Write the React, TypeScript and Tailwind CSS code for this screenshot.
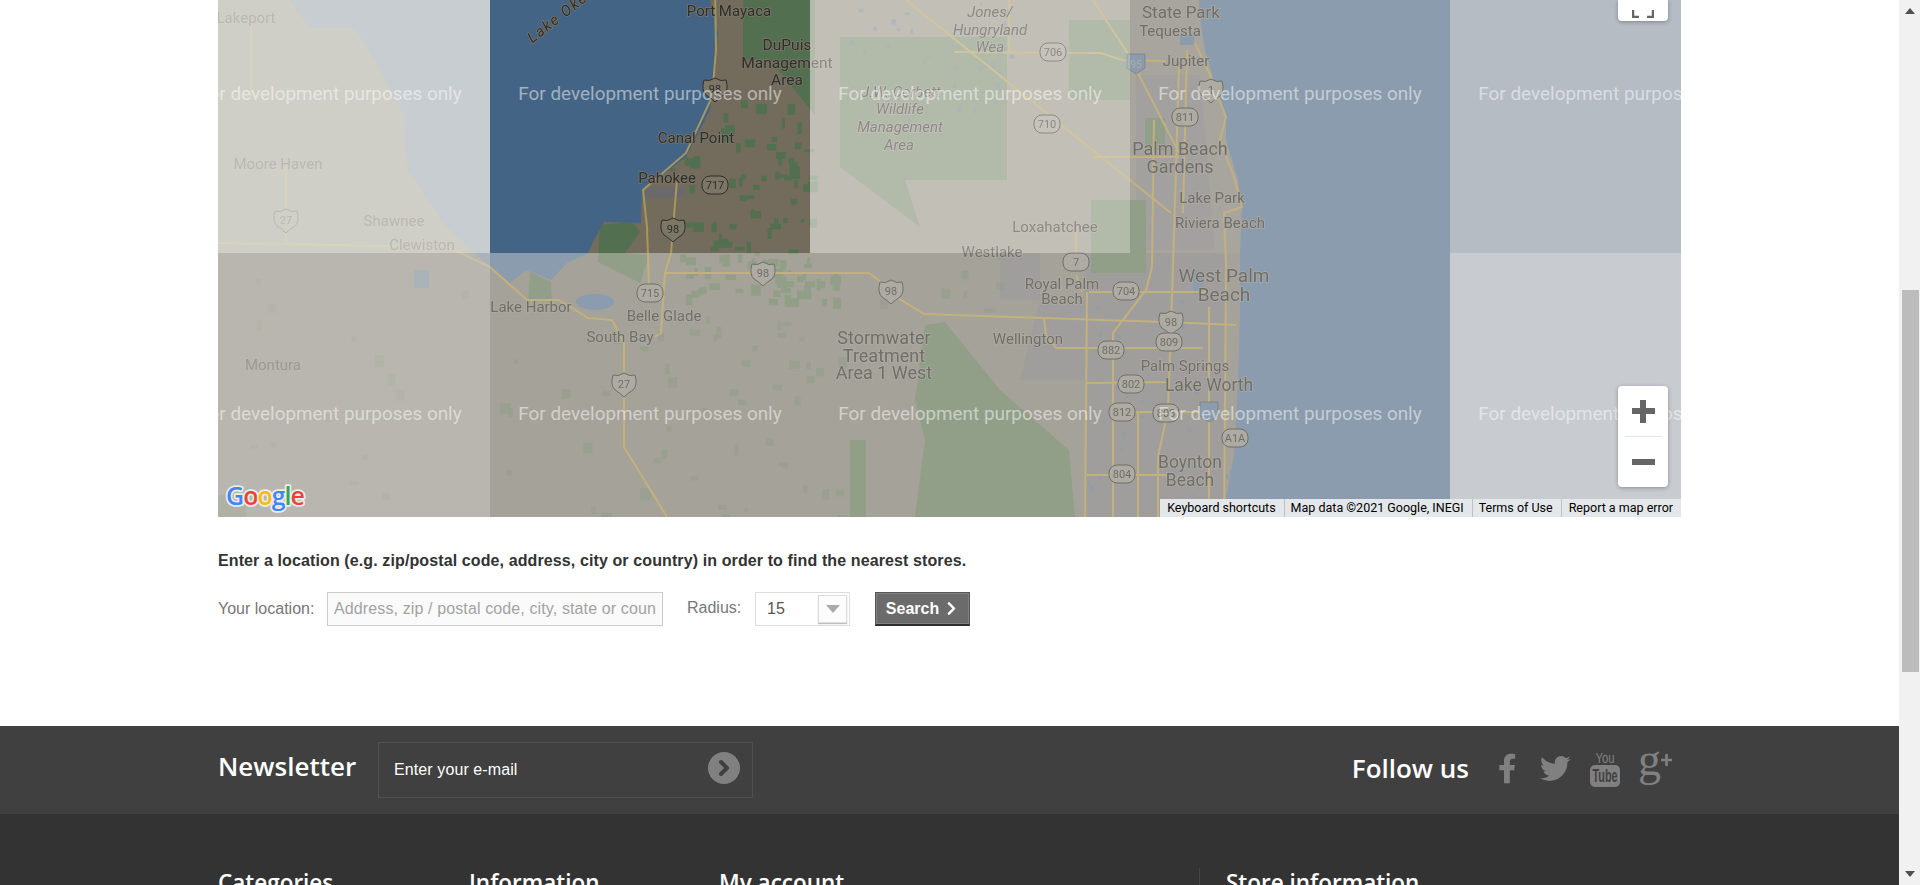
import { ChevronRight } from "lucide-react";
import { FaChevronRight, FaFacebookF, FaTwitter } from "react-icons/fa";

type Palette = {
  land: string;
  water: string;
  green: string;
  road: string;
  urban: string;
  text: string;
  halo: string;
};

const dim: Palette = { land: "#a5a299", water: "#8a9cad", green: "#929f88", road: "#c2b17c", urban: "#a09e9c", text: "#6f6e69", halo: "#aeaba2" };

const tiles: { x: number; y: number; p: Palette; flat?: boolean }[] = [
  { x: 170, y: -67, p: { land: "#cfcec7", water: "#c8cdd1", green: "#cacdc0", road: "#d8d3bb", urban: "#cbcac6", text: "#b9b8b1", halo: "#d0cfc8" } },
  { x: 490, y: -67, p: { land: "#736c5d", water: "#436484", green: "#52704f", road: "#a8965c", urban: "#6a6a6c", text: "#2f2e2b", halo: "#7c7667" } },
  { x: 810, y: -67, p: { land: "#c2bfb7", water: "#aab5bd", green: "#b2baa9", road: "#d0c59c", urban: "#bfbdb9", text: "#8b8a84", halo: "#c6c3bc" } },
  { x: 1130, y: -67, p: { ...dim, land: "#a8a59e", urban: "#a3a1a0" } },
  { x: 1450, y: -67, flat: true, p: { ...dim, water: "#b5bcc4" } },
  { x: 170, y: 253, p: { land: "#b8b6ae", water: "#a9b3b8", green: "#adb2a2", road: "#c6c0a6", urban: "#b3b1ab", text: "#9a9992", halo: "#bab8b0" } },
  { x: 490, y: 253, p: dim },
  { x: 810, y: 253, p: dim },
  { x: 1130, y: 253, p: dim },
  { x: 1450, y: 253, flat: true, p: { ...dim, water: "#c8ccd0" } },
];

// scattered fields and ponds, seeded so every tile draws the same ones
function specks(x0: number, y0: number, x1: number, y1: number, count: number, seed: number) {
  const out: { x: number; y: number; w: number; h: number }[] = [];
  let s = seed;
  const next = () => {
    s = (s * 16807) % 2147483647;
    return s / 2147483647;
  };
  for (let i = 0; i < count; i++) {
    out.push({ x: x0 + next() * (x1 - x0), y: y0 + next() * (y1 - y0), w: 3 + next() * 8, h: 3 + next() * 9 });
  }
  return out;
}

const farmFields = [...specks(670, 100, 810, 253, 70, 11), ...specks(680, 253, 835, 300, 50, 23)];
const sparseFields = [
  ...specks(640, 300, 840, 517, 40, 37),
  ...specks(500, 330, 620, 517, 10, 41),
  ...specks(250, 270, 480, 500, 14, 59),
  ...specks(880, 253, 1000, 310, 8, 67),
];
const ponds = [...specks(850, 0, 1010, 120, 40, 71), ...specks(1085, 300, 1230, 500, 30, 83)];

const lake = "M290,0 L310,28 L355,28 L375,60 L404,115 L408,170 L445,225 L490,267 L510,283 L526,270 L551,280 L567,263 L588,253 L594,240 L604,222 L641,223 L641,207 L643,190 L686,157 L710,110 L714,80 L718,33 L710,0 Z";
const ocean = "M1199,-70 L1199,10 L1205,50 L1220,100 L1226,117 L1226,140 L1238,180 L1242,207 L1240,253 L1240,317 L1238,383 L1234,457 L1226,497 L1224,600 L1800,600 L1800,-70 Z";

const greens = [
  "M743,-70 L815,-70 L815,115 L770,60 L743,60 Z",
  "M600,225 L632,222 L640,232 L625,253 L649,255 L640,283 L598,262 Z",
  "M530,272 L551,282 L552,300 L528,300 Z",
  "M840,37 L1007,37 L1007,180 L905,180 L920,227 L840,167 Z",
  "M1069,20 L1130,20 L1130,100 L1069,100 Z",
  "M1091,200 L1146,200 L1146,273 L1091,273 Z",
  "M925,325 L945,322 L1000,390 L1069,450 L1075,517 L915,517 L925,440 L915,400 Z",
  "M850,440 L866,440 L866,517 L850,517 Z",
  "M218,495 L246,495 L246,517 L218,517 Z",
  "M1145,118 L1165,118 L1165,150 L1145,150 Z",
];

const urban = [
  "M645,187 L685,187 L685,198 L645,198 Z",
  "M1000,253 L1040,253 L1040,300 L1000,300 Z",
  "M1040,300 L1085,300 L1085,380 L1020,380 Z",
  "M1085,253 L1225,253 L1225,517 L1085,517 Z",
  "M1136,75 L1200,75 L1215,250 L1136,250 Z",
];

const roads = [
  "M714,-70 L716,50 L712,97 L686,153 L643,190 L647,227 L649,287",
  "M677,180 L671,253 L665,273 L661,333 L655,337",
  "M665,273 L869,273 L881,282 L901,300 L924,314 L1044,318 L1166,322 L1236,325",
  "M490,267 L527,300 L559,300 L588,318 L612,320 L624,343 L624,447 L675,530",
  "M251,20 L251,100 M286,167 L286,243 M218,243 L445,247 L461,253 L490,267",
  "M881,-20 L1171,213",
  "M1093,0 L1130,57 L1138,73 L1179,153",
  "M1009,0 L1009,53 M954,52 L1101,53 L1122,60 L1166,61",
  "M1093,157 L1179,157",
  "M1154,120 L1152,267 L1146,290 L1113,333 L1113,530",
  "M1179,67 L1173,267 L1168,410 L1158,457 L1158,530",
  "M1187,50 L1183,213",
  "M1195,43 L1209,73 L1226,117 L1220,140 L1234,177 L1242,207 L1224,213 L1226,267 L1224,530",
  "M1209,307 L1209,530",
  "M1089,292 L1207,292 M1056,348 L1203,348 M1087,383 L1167,382 M1087,475 L1167,475 M1109,412 L1220,412",
  "M1087,292 L1085,530 M1138,413 L1138,530",
  "M1044,318 L1046,335 L1056,348",
  "M1076,262 L1076,232 M1076,275 L1082,292",
];

const labels: { t: string; x: number; y: number; s?: number; i?: boolean; r?: number; ls?: number }[] = [
  { t: "Lakeport", x: 246, y: 18 },
  { t: "Moore Haven", x: 278, y: 164 },
  { t: "Shawnee", x: 394, y: 221 },
  { t: "Clewiston", x: 422, y: 245 },
  { t: "Montura", x: 273, y: 365 },
  { t: "Lake Okeechobee", x: 583, y: -3, s: 15, i: true, r: -38, ls: 1.5 },
  { t: "Port Mayaca", x: 729, y: 11 },
  { t: "DuPuis", x: 787, y: 44, s: 15.5 },
  { t: "Management", x: 787, y: 62, s: 15.5 },
  { t: "Area", x: 787, y: 79, s: 15.5 },
  { t: "Canal Point", x: 696, y: 138 },
  { t: "Pahokee", x: 667, y: 178 },
  { t: "Lake Harbor", x: 531, y: 307 },
  { t: "Belle Glade", x: 664, y: 316 },
  { t: "South Bay", x: 620, y: 337 },
  { t: "Jones/", x: 990, y: 12, s: 15, i: true },
  { t: "Hungryland", x: 990, y: 30, s: 15, i: true },
  { t: "Wea", x: 990, y: 47, s: 15, i: true },
  { t: "J.W. Corbett", x: 901, y: 92, s: 15, i: true },
  { t: "Wildlife", x: 900, y: 109, s: 15, i: true },
  { t: "Management", x: 900, y: 127, s: 15, i: true },
  { t: "Area", x: 899, y: 145, s: 15, i: true },
  { t: "State Park", x: 1181, y: 12, s: 17 },
  { t: "Tequesta", x: 1170, y: 31 },
  { t: "Jupiter", x: 1186, y: 61 },
  { t: "Palm Beach", x: 1180, y: 149, s: 18 },
  { t: "Gardens", x: 1180, y: 167, s: 18 },
  { t: "Lake Park", x: 1212, y: 198 },
  { t: "Riviera Beach", x: 1220, y: 223 },
  { t: "Loxahatchee", x: 1055, y: 227 },
  { t: "Westlake", x: 992, y: 252 },
  { t: "Royal Palm", x: 1062, y: 284 },
  { t: "Beach", x: 1062, y: 299 },
  { t: "West Palm", x: 1224, y: 275, s: 19 },
  { t: "Beach", x: 1224, y: 294, s: 19 },
  { t: "Wellington", x: 1028, y: 339 },
  { t: "Stormwater", x: 884, y: 338, s: 18 },
  { t: "Treatment", x: 884, y: 356, s: 18 },
  { t: "Area 1 West", x: 884, y: 373, s: 18 },
  { t: "Palm Springs", x: 1185, y: 366 },
  { t: "Lake Worth", x: 1209, y: 385, s: 17.5 },
  { t: "Boynton", x: 1190, y: 462, s: 17.5 },
  { t: "Beach", x: 1190, y: 480, s: 17.5 },
];

const usShields = [
  { t: "98", x: 715, y: 89 },
  { t: "98", x: 673, y: 229 },
  { t: "27", x: 286, y: 220 },
  { t: "98", x: 763, y: 273 },
  { t: "27", x: 624, y: 384 },
  { t: "98", x: 891, y: 291 },
  { t: "98", x: 1171, y: 322 },
  { t: "1", x: 1211, y: 90 },
];

const stateShields = [
  { t: "717", x: 715, y: 185 },
  { t: "715", x: 650, y: 293 },
  { t: "706", x: 1053, y: 52 },
  { t: "811", x: 1185, y: 117 },
  { t: "710", x: 1047, y: 124 },
  { t: "7", x: 1076, y: 262 },
  { t: "704", x: 1126, y: 291 },
  { t: "809", x: 1169, y: 342 },
  { t: "882", x: 1111, y: 350 },
  { t: "802", x: 1131, y: 384 },
  { t: "812", x: 1122, y: 412 },
  { t: "808", x: 1166, y: 413 },
  { t: "A1A", x: 1235, y: 438 },
  { t: "804", x: 1122, y: 474 },
];

function MapArt({ p, x, y }: { p: Palette; x: number; y: number }) {
  // labels are only drawn in the tiles they can touch
  const near = (l: { x: number; y: number }) => Math.abs(l.x - (x + 160)) < 230 && Math.abs(l.y - (y + 160)) < 185;
  return (
    <g className="blur-[0.4px]">
      {urban.map((d) => (
        <path key={d} d={d} fill={p.urban} />
      ))}
      {greens.map((d) => (
        <path key={d} d={d} fill={p.green} />
      ))}
      {farmFields.map((f, i) => (
        <rect key={i} x={f.x} y={f.y} width={f.w} height={f.h} fill={p.green} />
      ))}
      {sparseFields.map((f, i) => (
        <rect key={i} x={f.x} y={f.y} width={f.w} height={f.h} fill={p.green} opacity={0.55} />
      ))}
      {ponds.map((f, i) => (
        <rect key={i} x={f.x} y={f.y} width={f.w / 2} height={f.h / 2} fill={p.water} opacity={0.7} />
      ))}
      <path d={lake} fill={p.water} />
      <path d={ocean} fill={p.water} />
      <ellipse cx={595} cy={302} rx={19} ry={8} fill={p.water} />
      <rect x={1180} y={35} width={14} height={10} fill={p.water} />
      <rect x={1193} y={270} width={9} height={24} fill={p.water} />
      <rect x={414} y={270} width={15} height={18} fill={p.water} />
      {roads.map((d) => (
        <path key={d} d={d} fill="none" stroke={p.road} strokeWidth={2} />
      ))}
      {labels.filter(near).map((l) => (
        <text
          key={l.t + l.x}
          x={l.x}
          y={l.y + (l.s ?? 15) * 0.36}
          textAnchor="middle"
          fontSize={l.s ?? 15}
          fontStyle={l.i ? "italic" : "normal"}
          letterSpacing={l.ls}
          fill={p.text}
          stroke={p.halo}
          strokeWidth={1.5}
          paintOrder="stroke"
          transform={l.r ? `rotate(${l.r} ${l.x} ${l.y})` : undefined}
        >
          {l.t}
        </text>
      ))}
      {usShields.filter(near).map((s) => (
        <g key={s.t + s.x}>
          <path
            d={`M${s.x - 11},${s.y - 9} q5,2 11,-2 q6,4 11,2 q3,10 -2,15 q-5,3 -9,7 q-4,-4 -9,-7 q-5,-5 -2,-15 Z`}
            fill={p.halo}
            stroke={p.text}
            strokeWidth={1}
          />
          <text x={s.x} y={s.y + 4} textAnchor="middle" fontSize={11} fill={p.text}>
            {s.t}
          </text>
        </g>
      ))}
      {stateShields.filter(near).map((s) => (
        <g key={s.t + s.x}>
          <rect x={s.x - 13} y={s.y - 9} width={26} height={18} rx={8} fill={p.halo} stroke={p.text} strokeWidth={1} />
          <text x={s.x} y={s.y + 4} textAnchor="middle" fontSize={11} fill={p.text}>
            {s.t}
          </text>
        </g>
      ))}
      <path d="M1127,54 L1145,54 L1145,68 L1136,74 L1127,68 Z" fill={p.water} stroke={p.text} strokeWidth={0.5} />
      <text x={1136} y={68} textAnchor="middle" fontSize={10} fill={p.halo}>
        95
      </text>
      <path d="M1200,402 L1218,402 L1218,416 L1209,422 L1200,416 Z" fill={p.water} stroke={p.text} strokeWidth={0.5} />
    </g>
  );
}

function MapTile({ x, y, p, flat }: { x: number; y: number; p: Palette; flat?: boolean }) {
  return (
    <svg
      className="absolute font-[Roboto,sans-serif]"
      width={320}
      height={320}
      viewBox={`${x} ${y} 320 320`}
      style={{ left: x - 218, top: y, background: flat ? p.water : p.land }}
    >
      {!flat && <MapArt p={p} x={x} y={y} />}
      <text x={x + 160} y={y + 167} textAnchor="middle" fontSize={18.9} fill="#ffffff" fillOpacity={0.5}>
        For development purposes only
      </text>
    </svg>
  );
}

function GoogleLogo() {
  const letters = [
    { c: "G", f: "#4285f4" },
    { c: "o", f: "#ea4335" },
    { c: "o", f: "#fbbc05" },
    { c: "g", f: "#4285f4" },
    { c: "l", f: "#34a853" },
    { c: "e", f: "#ea4335" },
  ];
  return (
    <svg className="absolute left-[6px] bottom-[3px]" width={84} height={30} viewBox="0 0 84 30">
      <text x={2} y={21} fontSize={25} fontWeight={600} fontFamily="Open Sans, sans-serif" letterSpacing={-1} stroke="#ececec" strokeWidth={3.5} paintOrder="stroke" strokeLinejoin="round">
        {letters.map((l, i) => (
          <tspan key={i} fill={l.f}>
            {l.c}
          </tspan>
        ))}
      </text>
    </svg>
  );
}

function ZoomControl() {
  return (
    <div className="absolute left-[1400px] top-[386px] flex h-[101px] w-[50px] flex-col items-center rounded-sm bg-white shadow-[0_1px_4px_rgba(0,0,0,0.3)]">
      <div className="relative h-[50px] w-full">
        <div className="absolute left-[14px] top-[22px] h-[6px] w-[23px] bg-[#666666]" />
        <div className="absolute left-[22px] top-[14px] h-[23px] w-[6px] bg-[#666666]" />
      </div>
      <div className="h-px w-[37px] bg-[#e6e6e6]" />
      <div className="flex h-[50px] w-full items-center justify-center">
        <div className="h-[6px] w-[23px] bg-[#666666]" />
      </div>
    </div>
  );
}

function Attribution() {
  return (
    <div className="absolute bottom-0 right-0 flex h-[18px] items-center bg-[#e4e7e9] pt-[1px] font-[Roboto,sans-serif] text-[12.5px] text-black">
      <span className="pl-[7px] pr-[8px]">Keyboard shortcuts</span>
      <span className="border-l border-[#b8c0c8] pl-[6px] pr-[8px]">Map data ©2021 Google, INEGI</span>
      <span className="border-l border-[#b8c0c8] pl-[6px] pr-[8px]">Terms of Use</span>
      <span className="border-l border-[#b8c0c8] pl-[7px] pr-[8px]">Report a map error</span>
    </div>
  );
}

function LocationForm() {
  return (
    <div className="mx-auto w-[1463px] pt-[35px]">
      <h2 className="text-base font-bold leading-[18px] tracking-[0.11px] text-[#333333]">
        Enter a location (e.g. zip/postal code, address, city or country) in order to find the nearest stores.
      </h2>
      <div className="mt-[22px] flex h-[34px] items-center">
        <span className="w-[109px] pb-[1px] text-base text-[#777777]">Your location:</span>
        <input
          readOnly
          placeholder="Address, zip / postal code, city, state or country"
          className="h-[34px] w-[336px] border border-[#cccccc] bg-[#fafafa] px-[6px] text-base tracking-[0.12px] outline-none placeholder:text-[#a3a3a3]"
        />
        <span className="ml-[24px] w-[68px] pb-[3px] text-base text-[#777777]">Radius:</span>
        <div className="flex h-[34px] w-[95px] items-center justify-between border border-[#dddddd] bg-white pl-[11px] pr-[2px]">
          <span className="text-base text-[#555555]">15</span>
          <div className="flex h-[28px] w-[29px] items-center justify-center border border-[#dddddd] bg-[#fcfcfc] shadow-[0_1px_1px_rgba(0,0,0,0.25)]">
            <svg width={14} height={8} viewBox="0 0 14 8">
              <path d="M0,0 L14,0 L7,8 Z" fill="#aaaaaa" />
            </svg>
          </div>
        </div>
        <button className="ml-[25px] flex h-[34px] w-[95px] items-center justify-center gap-[5px] border border-[#555555] border-b-2 border-b-[#2e2e2e] bg-[#6b6b6b] text-base font-bold text-white shadow-[inset_0_0_0_1px_#808080]">
          Search
          <FaChevronRight size={15} />
        </button>
      </div>
    </div>
  );
}

function YouTubeIcon() {
  return (
    <svg width={30} height={36} viewBox="0 0 30 36" className="font-['Liberation_Sans',sans-serif]">
      <text x={15} y={12} textAnchor="middle" fontSize={15} fill="#808080" textLength={19} lengthAdjust="spacingAndGlyphs">
        You
      </text>
      <rect x={0} y={14} width={30} height={22} rx={5} fill="#808080" />
      <text x={15} y={31} textAnchor="middle" fontSize={18} fontWeight={700} fill="#404040" textLength={25} lengthAdjust="spacingAndGlyphs">
        Tube
      </text>
    </svg>
  );
}

function GooglePlusIcon() {
  return (
    <svg width={35} height={36} viewBox="0 0 35 36" className="font-['Liberation_Serif',serif]">
      <text x={0} y={24} fontSize={46} fill="#808080">
        g
      </text>
      <path d="M23,9 H34 M28.5,3 V15" stroke="#808080" strokeWidth={2.5} />
    </svg>
  );
}

function NewsletterBar() {
  return (
    <div className="h-[88px] shrink-0 bg-[#404040]">
      <div className="mx-auto flex h-full w-[1463px] items-center">
        <span className="w-[160px] pb-[8px] font-['Open_Sans',sans-serif] text-[26px] font-semibold text-white">Newsletter</span>
        <div className="flex h-[56px] w-[375px] items-center justify-between border border-[#505050] pl-[15px] pr-[12px]">
          <span className="tracking-[0.1px] pb-[1px] text-base text-white">Enter your e-mail</span>
          <div className="mb-[4px] flex h-[32px] w-[32px] items-center justify-center rounded-full bg-[#808080]">
            <ChevronRight size={24} strokeWidth={4} className="text-[#404040]" />
          </div>
        </div>
        <span className="ml-auto pb-[4px] font-['Open_Sans',sans-serif] text-[26px] font-semibold text-white">Follow us</span>
        <div className="ml-[29px] mr-[8px] mb-[3px] flex w-[175px] items-center">
          <FaFacebookF className="h-[33px] w-[20px] text-[#808080]" />
          <FaTwitter className="ml-[24px] h-[33px] w-[33px] text-[#808080]" />
          <div className="ml-[19px]">
            <YouTubeIcon />
          </div>
          <div className="ml-[18px]">
            <GooglePlusIcon />
          </div>
        </div>
      </div>
    </div>
  );
}

function FooterColumns() {
  const heading = "font-['Open_Sans',sans-serif] text-[22.5px] font-semibold leading-[30px] text-white";
  return (
    <div className="min-h-0 flex-1 overflow-hidden bg-[#333333]">
      <div className="mx-auto flex w-[1463px] pt-[54px]">
        <div className={`w-[251px] ${heading}`}>Categories</div>
        <div className={`w-[250px] ${heading}`}>Information</div>
        <div className={`w-[480px] ${heading}`}>My account</div>
        <div className={`border-l border-[#454545] pl-[26px] ${heading}`}>Store information</div>
      </div>
    </div>
  );
}

function Scrollbar() {
  return (
    <div className="flex h-full w-[21px] flex-col items-center bg-[#f1f1f1]">
      <svg className="mt-[8px]" width={10} height={6} viewBox="0 0 10 6">
        <path d="M5,0 L10,6 L0,6 Z" fill="#505050" />
      </svg>
      <div className="ml-[1px] mt-[276px] h-[382px] w-[17px] bg-[#bcbcbc]" />
      <svg className="mt-auto mb-[8px]" width={10} height={6} viewBox="0 0 10 6">
        <path d="M0,0 L10,0 L5,6 Z" fill="#505050" />
      </svg>
    </div>
  );
}

export default function App() {
  return (
    <div className="flex h-[885px] overflow-hidden bg-white font-['Liberation_Sans',sans-serif]">
      <div className="flex h-full min-w-0 flex-1 flex-col">
        <div className="relative mx-auto h-[517px] w-[1463px] shrink-0 overflow-hidden">
          {tiles.map((t) => (
            <MapTile key={`${t.x}-${t.y}`} {...t} />
          ))}
          <GoogleLogo />
          <div className="absolute left-[1400px] top-0 flex h-[21px] w-[50px] items-end justify-center rounded-b-sm bg-white pb-[3px] shadow-[0_1px_4px_rgba(0,0,0,0.3)]">
            <svg width={22} height={8} viewBox="0 0 22 8">
              <path d="M1,0 V7 H7 M21,0 V7 H15" fill="none" stroke="#666666" strokeWidth={2.5} />
            </svg>
          </div>
          <ZoomControl />
          <Attribution />
        </div>
        <div className="h-[209px] shrink-0">
          <LocationForm />
        </div>
        <NewsletterBar />
        <FooterColumns />
      </div>
      <Scrollbar />
    </div>
  );
}
